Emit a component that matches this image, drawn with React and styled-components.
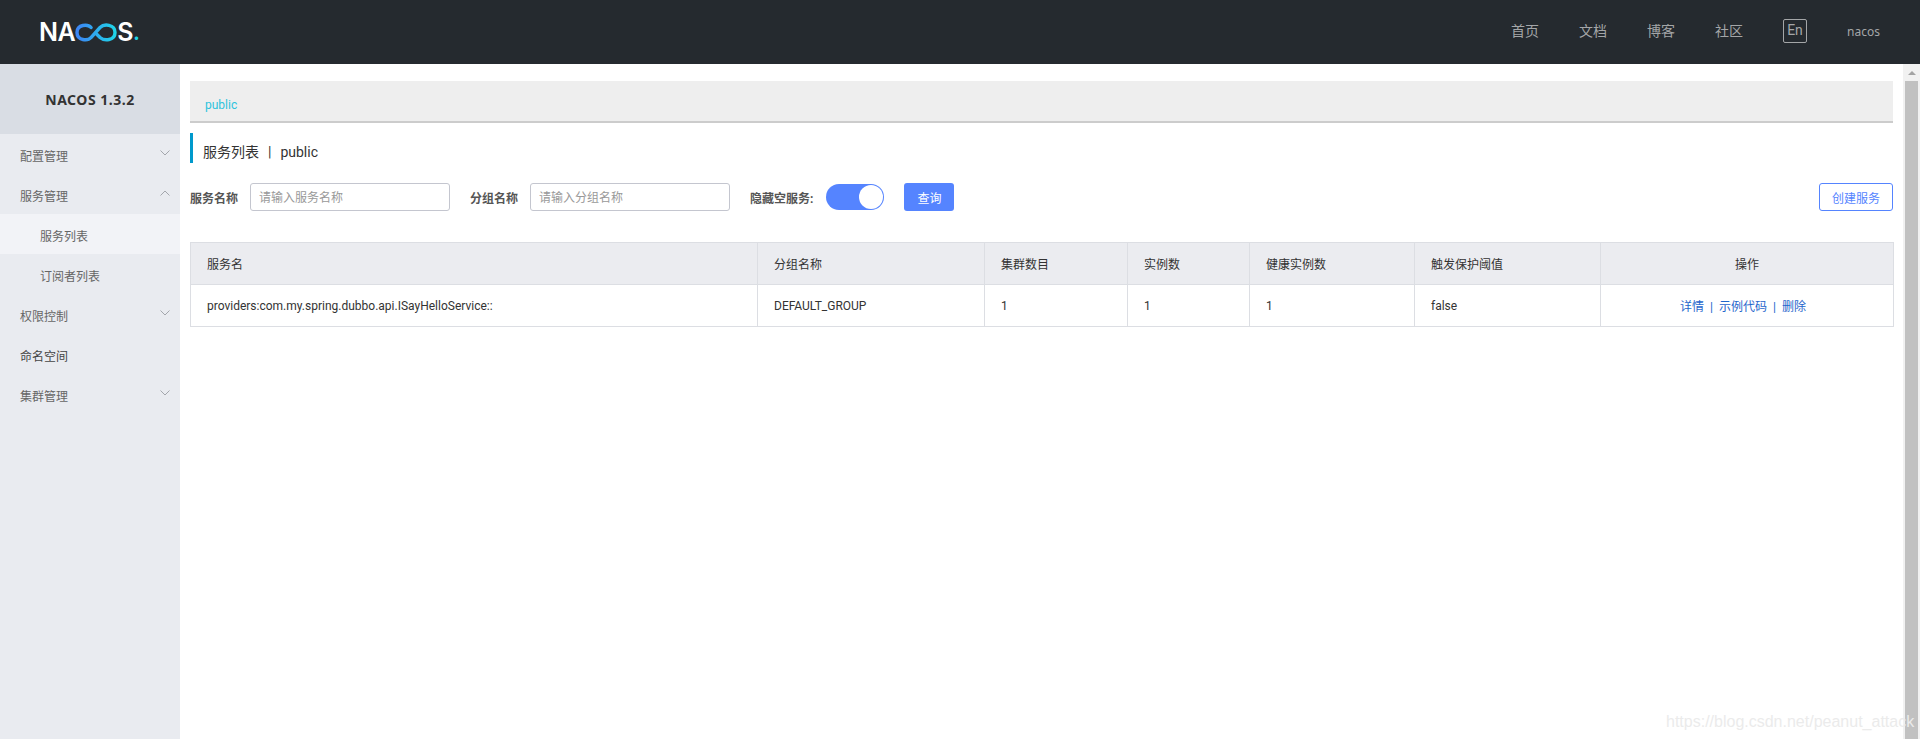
import React from "react";
import styled, { createGlobalStyle } from "styled-components";

const Global = createGlobalStyle`
  html, body { margin: 0; padding: 0; height: 100%; overflow: hidden; background: #fff; }
  body { font-family: Roboto, "Noto Sans CJK SC", sans-serif; font-size: 12px; color: #333; }
  * { box-sizing: border-box; }
`;

const Page = styled.div`display: flex; flex-direction: column; height: 739px; width: 1920px; position: relative; overflow: hidden;`;
const Header = styled.header`height: 64px; flex: none; background: #252a2f; display: flex; align-items: center; justify-content: space-between; padding: 0 40px 0 39px;`;
const Logo = styled.div`display: flex; align-items: center; height: 20px; font-family: Inter, sans-serif; font-weight: 600; font-size: 25px; line-height: 20px; color: #fff; letter-spacing: -0.5px;`;
const LogoDot = styled.span`color: #1fd3e8; font-size: 22px;`;
const InfinityMark = styled.svg`width: 42px; height: 19px; flex: none; fill: none;`;
const Nav = styled.nav`display: flex; align-items: center; gap: 40px; color: #a4a6a8;`;
const NavItem = styled.span`font-size: 14px; line-height: 20px; margin-top: -3px;`;
const Lang = styled.span`width: 24px; height: 24px; border: 1px solid #a4a6a8; border-radius: 2px; font-size: 14px; line-height: 20px; text-align: center; margin-top: -2px;`;
const User = styled.span`font-family: "Noto Sans", sans-serif; font-size: 12px; line-height: 20px; width: 33px;`;

const Body = styled.div`flex: 1; display: flex; min-height: 0;`;
const Sidebar = styled.aside`width: 180px; flex: none; background: #e9ebf0;`;
const Version = styled.div`height: 70px; background: #d9dde4; display: flex; align-items: center; justify-content: center; font-family: "Noto Sans", sans-serif; font-weight: 700; font-size: 14px; color: #333; letter-spacing: 0.5px;`;
const MenuItem = styled.div`
  height: 40px; display: flex; align-items: center; justify-content: space-between;
  padding: 0 10px 0 ${p => (p.$sub ? 40 : 20)}px;
  background: ${p => (p.$active ? "#f2f3f7" : "transparent")};
  color: ${p => (p.$dark ? "#444" : "#666")};
  font-size: 12px;
`;
const MenuLabel = styled.span`margin-top: 3px;`;
const Chevron = styled.svg`width: 10px; height: 6px; margin-top: -2px; fill: none; stroke: #a3a6ac; stroke-width: 1;`;

const Main = styled.main`flex: 1; min-width: 0; padding: 17px 10px 0 10px;`;
const Crumb = styled.div`height: 42px; background: #eee; border-bottom: 2px solid #ccc; padding: 15px 15px 0; font-size: 12px; line-height: 18px; color: #2dc3dd;`;
const Title = styled.div`height: 30px; margin-top: 10px; border-left: 3px solid #09c; padding: 8px 0 0 10px; font-size: 14px; line-height: 22px; color: #333; display: flex; align-items: center; gap: 9px;`;
const TitleBar = styled.span`color: #333;`;
const Form = styled.div`margin-top: 20px; height: 28px; display: flex; align-items: center;`;
const Label = styled.label`font-size: 12px; font-weight: 700; color: #555; margin-right: ${p => p.$gap}px;`;
const Input = styled.input`
  width: 200px; height: 28px; border: 1px solid #c4c6cf; border-radius: 3px; padding: 2px 8px 0; margin-right: 20px;
  font: inherit; font-size: 12px; background: #fff; outline: none;
  &::placeholder { color: #999; opacity: 1; }
`;
const Switch = styled.span`width: 58px; height: 26px; margin: 0 20px 0 13px; border-radius: 13px; background: #5584ff; display: flex; align-items: center; justify-content: flex-end; padding-right: 1px;`;
const Knob = styled.span`width: 24px; height: 24px; border-radius: 50%; background: #fff;`;
const Primary = styled.button`width: 50px; height: 28px; border: none; border-radius: 3px; background: #5584ff; color: #fff; font: inherit; font-size: 12px; padding: 0;`;
const Spacer = styled.div`flex: 1;`;
const Outline = styled.button`width: 74px; height: 28px; border: 1px solid #5584ff; border-radius: 3px; background: #fff; color: #5584ff; font: inherit; font-size: 12px; padding: 0;`;

const Table = styled.table`margin-top: 31px; width: 1703px; border-collapse: collapse; table-layout: fixed; border: 1px solid #dcdee3; font-size: 12px; color: #333;`;
const Th = styled.th`height: 42px; background: #ebecf0; border: 1px solid #dcdee3; padding: 0 16px; font-weight: 400; text-align: ${p => p.$center ? "center" : "left"};`;
const Td = styled.td`height: 42px; border: 1px solid #dcdee3; padding: 0 16px;`;
const ActionCell = styled(Td)`text-align: center; padding-right: 24px;`;
const Link = styled.a`color: #1f66cc; text-decoration: none;`;
const Sep = styled.span`color: #1f66cc; margin: 0 6px;`;

const Scrollbar = styled.div`width: 17px; flex: none; background: #f1f1f1; padding: 0 2px; display: flex; flex-direction: column; align-items: center;`;
const ArrowUp = styled.span`flex: none; height: 17px; width: 100%; display: flex; align-items: center; justify-content: center;
  &::before { content: ""; border-left: 4px solid transparent; border-right: 4px solid transparent; border-bottom: 4px solid #a3a3a3; }
`;
const Thumb = styled.div`flex: 1; width: 100%; background: #c1c1c1;`;
const Watermark = styled.div`position: absolute; left: 1666px; top: 710px; font-family: "Liberation Sans", sans-serif; font-size: 16px; line-height: 24px; color: #ebebeb; white-space: nowrap;`;

const Down = () => <Chevron viewBox="0 0 10 6"><polyline points="0.5,0.5 5,5 9.5,0.5" /></Chevron>;
const Up = () => <Chevron viewBox="0 0 10 6"><polyline points="0.5,5.5 5,1 9.5,5.5" /></Chevron>;

const cols = [567, 227, 143, 122, 165, 186, 293];
const heads = ["服务名", "分组名称", "集群数目", "实例数", "健康实例数", "触发保护阈值"];
const cells = ["providers:com.my.spring.dubbo.api.ISayHelloService::", "DEFAULT_GROUP", "1", "1", "1", "false"];

export default function App() {
  return (
    <Page>
      <Global />
      <Header>
        <Logo>
          <span>NA</span>
          <InfinityMark viewBox="0 0 42 19">
            <defs>
              <linearGradient id="lg" x1="0" x2="1" y1="0" y2="0">
                <stop offset="0" stopColor="#3d85f5" />
                <stop offset="1" stopColor="#1fd3e8" />
              </linearGradient>
            </defs>
            <path d="M16 4.5C13 1 2 1 2 9.5C2 18 13 18 16 14.5L25 4.5C29 0.5 40 1 40 9.5C40 18 29 18 25 14.5L22 11.5" stroke="url(#lg)" strokeWidth="3.4" strokeLinecap="round" />
          </InfinityMark>
          <span>S</span>
          <LogoDot>.</LogoDot>
        </Logo>
        <Nav>
          <NavItem>首页</NavItem>
          <NavItem>文档</NavItem>
          <NavItem>博客</NavItem>
          <NavItem>社区</NavItem>
          <Lang>En</Lang>
          <User>nacos</User>
        </Nav>
      </Header>
      <Body>
        <Sidebar>
          <Version>NACOS 1.3.2</Version>
          <MenuItem><MenuLabel>配置管理</MenuLabel><Down /></MenuItem>
          <MenuItem><MenuLabel>服务管理</MenuLabel><Up /></MenuItem>
          <MenuItem $sub $active><MenuLabel>服务列表</MenuLabel></MenuItem>
          <MenuItem $sub><MenuLabel>订阅者列表</MenuLabel></MenuItem>
          <MenuItem><MenuLabel>权限控制</MenuLabel><Down /></MenuItem>
          <MenuItem $dark><MenuLabel>命名空间</MenuLabel></MenuItem>
          <MenuItem><MenuLabel>集群管理</MenuLabel><Down /></MenuItem>
        </Sidebar>
        <Main>
          <Crumb>public</Crumb>
          <Title>服务列表<TitleBar>|</TitleBar>public</Title>
          <Form>
            <Label $gap={12}>服务名称</Label>
            <Input placeholder="请输入服务名称" />
            <Label $gap={12}>分组名称</Label>
            <Input placeholder="请输入分组名称" />
            <Label $gap={0}>隐藏空服务:</Label>
            <Switch><Knob /></Switch>
            <Primary>查询</Primary>
            <Spacer />
            <Outline>创建服务</Outline>
          </Form>
          <Table>
            <colgroup>{cols.map((w, i) => <col key={i} style={{ width: w }} />)}</colgroup>
            <thead>
              <tr>
                {heads.map(h => <Th key={h}>{h}</Th>)}
                <Th $center>操作</Th>
              </tr>
            </thead>
            <tbody>
              <tr>
                {cells.map((c, i) => <Td key={i}>{c}</Td>)}
                <ActionCell><Link>详情</Link><Sep>|</Sep><Link>示例代码</Link><Sep>|</Sep><Link>删除</Link></ActionCell>
              </tr>
            </tbody>
          </Table>
        </Main>
        <Scrollbar>
          <ArrowUp />
          <Thumb />
        </Scrollbar>
      </Body>
      <Watermark>https://blog.csdn.net/peanut_attack</Watermark>
    </Page>
  );
}
